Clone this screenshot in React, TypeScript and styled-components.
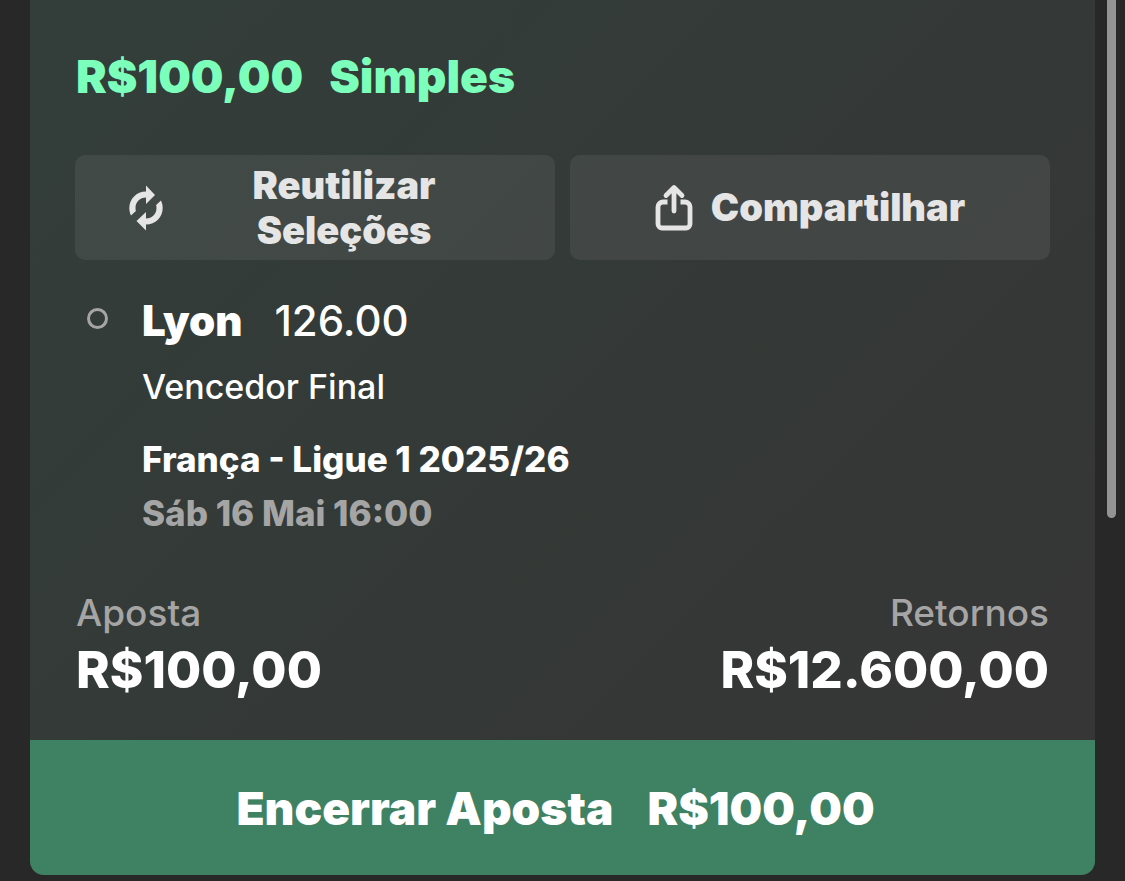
import React from "react";
import styled, { createGlobalStyle } from "styled-components";

const RefreshIcon = () => (
  <svg width="34" height="46" viewBox="0 0 34 46" fill="currentColor" aria-hidden="true">
    <path d="M17 .5l9 9.500-9 9v-6.500C11 12.500 6.500 17 6.500 23c0 1 .1 2 .4 3L2 30.500C.8 28 .3 25.500.3 23 .3 14 7.500 6.500 17 6.500z" />
    <path d="M17 45.500l-9.500-9.500 9.500-9v6.500c6 0 10.500-4.500 10.500-10.500 0-1-.1-2-.4-3l4.900-4.500c1.200 2.500 1.700 5 1.700 7.500 0 9-7.200 16.500-16.700 16.500z" />
  </svg>
);

const ShareIcon = () => (
  <svg
    width="38"
    height="48"
    viewBox="0 0 38 48"
    fill="none"
    stroke="currentColor"
    strokeWidth="4.8"
    strokeLinejoin="round"
    aria-hidden="true"
  >
    <path d="M12.500 18H8a5 5 0 0 0-5 5v17a4 4 0 0 0 4 4h24a4 4 0 0 0 4-4V23a5 5 0 0 0-5-5h-4.500" />
    <path d="M19 27V4M11 11.500l8-8 8 8" strokeLinecap="round" />
  </svg>
);

export default function App() {
  return (
    <Page>
      <GlobalStyle />
      <BetCard>
        <Details>
          <Title>
            <span>R$100,00</span>
            <span>Simples</span>
          </Title>
          <Actions>
            <ActionButton type="button">
              <RefreshIcon />
              <ReuseLabel>Reutilizar Seleções</ReuseLabel>
            </ActionButton>
            <ActionButton type="button" $centered>
              <ShareIcon />
              <span>Compartilhar</span>
            </ActionButton>
          </Actions>
          <Selection>
            <Marker />
            <div>
              <Pick>
                <strong>Lyon</strong>
                <span>126.00</span>
              </Pick>
              <Market>Vencedor Final</Market>
              <League>França - Ligue 1 2025/26</League>
              <EventDate>Sáb 16 Mai 16:00</EventDate>
            </div>
          </Selection>
          <Totals>
            <Total>
              <dt>Aposta</dt>
              <dd>R$100,00</dd>
            </Total>
            <Total $right>
              <dt>Retornos</dt>
              <dd>R$12.600,00</dd>
            </Total>
          </Totals>
        </Details>
        <CashOut type="button">
          <span>Encerrar Aposta</span>
          <span>R$100,00</span>
        </CashOut>
      </BetCard>
      <ScrollThumb />
    </Page>
  );
}

const GlobalStyle = createGlobalStyle`
  * {
    box-sizing: border-box;
  }
  body {
    margin: 0;
    background: #282828;
    color: #fff;
  }
  body,
  button {
    font-family: Inter, "Liberation Sans", sans-serif;
  }
`;
const Page = styled.main`
  display: flex;
  align-items: flex-start;
  gap: 12px;
  padding: 0 9px 6px 30px;
`;
const BetCard = styled.article`
  flex: 1;
  min-width: 0;
  border-radius: 0 0 14px 14px;
  overflow: hidden;
  background: linear-gradient(135deg, #333e3a 0%, #343836 60%, #363636 85%);
`;
const Details = styled.div`
  padding: 48px 45px 40px;
`;
const Title = styled.h1`
  display: flex;
  gap: 26px;
  margin: 0 0 51px;
  padding-left: 1px;
  font-size: 46px;
  line-height: 56px;
  font-weight: 900;
  color: #7dffbc;
`;
const Actions = styled.div`
  display: grid;
  grid-template-columns: 1fr 1fr;
  gap: 15px;
`;
const ActionButton = styled.button<{ $centered?: boolean }>`
  display: flex;
  align-items: center;
  justify-content: ${(p) => (p.$centered ? "center" : "flex-start")};
  gap: 18px;
  height: 105px;
  padding: ${(p) => (p.$centered ? "0" : "0 48px 0 54px")};
  border: 0;
  border-radius: 10px;
  background: rgba(255, 255, 255, 0.07);
  color: #e5e5e5;
  font-size: 38px;
  line-height: 45px;
  font-weight: 900;
`;
const ReuseLabel = styled.span`
  flex: 1;
  text-align: center;
`;
const Selection = styled.section`
  display: flex;
  gap: 34px;
  padding: 33px 12px 0;
`;
const Marker = styled.span`
  flex: none;
  width: 21px;
  height: 21px;
  margin-top: 15px;
  border: 3px solid #a5a5a5;
  border-radius: 50%;
`;
const Pick = styled.h2`
  display: flex;
  gap: 32px;
  margin: 0;
  font-size: 42px;
  line-height: 56px;
  font-weight: 500;
  strong {
    font-weight: 900;
  }
`;
const Market = styled.p`
  margin: 18px 0 0;
  font-size: 34px;
  line-height: 40px;
  font-weight: 500;
`;
const League = styled.p`
  margin: 32px 0 0;
  font-size: 35px;
  line-height: 40px;
  font-weight: 800;
`;
const EventDate = styled(League)`
  margin-top: 14px;
  color: #a5a5a5;
`;
const Totals = styled.dl`
  display: flex;
  justify-content: space-between;
  margin: 58px 0 0;
  padding: 0 1px;
`;
const Total = styled.div<{ $right?: boolean }>`
  text-align: ${(p) => (p.$right ? "right" : "left")};
  dt {
    font-size: 37px;
    line-height: 44px;
    font-weight: 500;
    color: #a5a5a5;
  }
  dd {
    margin: 5px 0 0;
    font-size: 51px;
    line-height: 60px;
    font-weight: 800;
  }
`;
const CashOut = styled.button`
  display: flex;
  justify-content: center;
  align-items: center;
  gap: 34px;
  width: 100%;
  height: 135px;
  padding: 0 14px 0 0;
  border: 0;
  background: #3f8163;
  color: #fff;
  font-size: 46px;
  line-height: 56px;
  font-weight: 900;
`;
const ScrollThumb = styled.div`
  width: 9px;
  height: 518px;
  border-radius: 0 0 5px 5px;
  background: #949494;
`;
